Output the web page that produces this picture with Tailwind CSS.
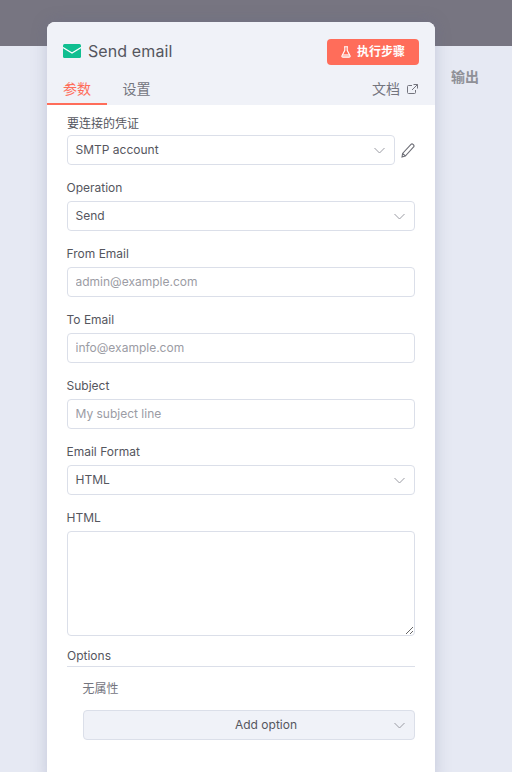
<!DOCTYPE html>
<html lang="en">
<head>
    <meta charset="UTF-8">
    <title>Send email</title>
    <script src="https://cdn.jsdelivr.net/npm/@tailwindcss/browser@4"></script>
</head>
<body class="bg-[#e6e9f3] font-['Inter','Noto_Sans_CJK_SC',sans-serif] antialiased">
    <div class="relative h-[772px] w-[512px] overflow-hidden">
        <!-- dimmed top bar -->
        <div class="h-[46px] bg-[#777581]"></div>
        <!-- output label -->
        <div class="absolute left-[451px] top-[68px] text-[14px] leading-[18px] font-semibold text-[#8f9097]">输出</div>

        <!-- node panel -->
        <div class="absolute left-[47px] top-[22px] h-[760px] w-[388px] overflow-hidden rounded-t-lg bg-white shadow-[0_0_16px_rgba(90,100,140,0.25)]">
            <div class="h-[83px] bg-[#f0f2f8]">
                <div class="flex h-[60px] items-center justify-between px-[16px]">
                    <div class="flex items-center gap-[7px]">
                        <svg width="18" height="14" viewBox="0 0 18 14" class="mt-[-3px]">
                            <rect width="18" height="14" rx="1.500" fill="#10bf91"></rect>
                            <path d="M0 3.500 9 9 18 3.500" fill="none" stroke="#fff" stroke-width="1.200"></path>
                        </svg>
                        <span class="mt-[-3px] text-[16px] leading-[20px] tracking-[0.1px] text-[#55565e]">Send email</span>
                    </div>
                    <button class="mt-[-1px] flex h-[26px] w-[92px] items-center justify-center gap-[6px] rounded-[4px] bg-[#ff6d5a] text-[12px] font-semibold text-white">
                        <svg width="10" height="12" viewBox="0 0 10 12" fill="none" stroke="#fff" stroke-width="1.100">
                            <path d="M3 .7h4M3.800.7v3.600L1 9.700c-.4.800 0 1.600 1 1.600h6c1 0 1.400-.8 1-1.600L6.200 4.300V.7"></path>
                            <path d="M2 8h6l1 2.500-1 .8H2l-1-.8z" fill="#fff" fill-opacity=".6" stroke="none"></path>
                        </svg>
                        执行步骤
                    </button>
                </div>
                <div class="flex h-[23px] items-start text-[14px] leading-[14px]">
                    <div class="h-[23px] w-[60px] border-b-[2px] border-[#ff6d5a] pl-[16px] text-[#ff6d5a]">参数</div>
                    <div class="ml-[15.500px] text-[#74757e]">设置</div>
                    <div class="ml-auto flex items-center gap-[7px] pr-[17px] text-[#74757e]">
                        文档
                        <svg width="11" height="11" viewBox="0 0 11 11" fill="none" stroke="#74757e" stroke-width="1">
                            <path d="M5 1.500H1.500a1 1 0 0 0-1 1v6a1 1 0 0 0 1 1h6a1 1 0 0 0 1-1V6M6.500.5h4v4M10.500.5 5 6"></path>
                        </svg>
                    </div>
                </div>
            </div>

            <div class="px-[20px] text-[12px] leading-[18px] text-[#55565e]">
                <div class="pt-[10px]">
                    <div class="mb-[2px]">要连接的凭证</div>
                    <div class="flex items-center">
                        <div class="flex h-[30px] w-[328px] items-center justify-between rounded-[4px] border border-[#dbdfe9] pl-[7.500px] pr-[9px]">
                            SMTP account
                            <svg width="11" height="7" viewBox="0 0 11 7" fill="none" stroke="#9a9ba3" stroke-width="1"><path d="M.5 1 5.500 6l5-5"></path></svg>
                        </div>
                        <svg class="ml-[6px]" width="14" height="15" viewBox="0 0 14 15" fill="none" stroke="#6d6e76" stroke-width="1.100">
                            <path d="M1 14l.6-3.600L10 1.400c.6-.6 1.400-.6 2 0l.6.6c.6.6.6 1.400 0 2L4.300 13zM1.600 10.400 4.300 13"></path>
                        </svg>
                    </div>
                </div>

                <div class="mt-[14px]">
                    <div class="mb-[4px] ml-[-0.500px]">Operation</div>
                    <div class="flex h-[30px] items-center justify-between rounded-[4px] border border-[#dbdfe9] pl-[7.500px] pr-[9px]">
                        Send
                        <svg width="11" height="7" viewBox="0 0 11 7" fill="none" stroke="#9a9ba3" stroke-width="1"><path d="M.5 1 5.500 6l5-5"></path></svg>
                    </div>
                </div>

                <div class="mt-[14px]">
                    <div class="mb-[4px] ml-[-0.500px]">From Email</div>
                    <input class="block h-[30px] w-full rounded-[4px] border border-[#dbdfe9] pl-[7.500px] pb-[1px] placeholder:text-[#9b9ca4]" placeholder="admin@example.com">
                </div>

                <div class="mt-[14px]">
                    <div class="mb-[4px] ml-[-0.500px]">To Email</div>
                    <input class="block h-[30px] w-full rounded-[4px] border border-[#dbdfe9] pl-[7.500px] pb-[1px] placeholder:text-[#9b9ca4]" placeholder="info@example.com">
                </div>

                <div class="mt-[14px]">
                    <div class="mb-[4px] ml-[-0.500px]">Subject</div>
                    <input class="block h-[30px] w-full rounded-[4px] border border-[#dbdfe9] pl-[7.500px] pb-[1px] placeholder:text-[#9b9ca4]" placeholder="My subject line">
                </div>

                <div class="mt-[14px]">
                    <div class="mb-[4px] ml-[-0.500px]">Email Format</div>
                    <div class="flex h-[30px] items-center justify-between rounded-[4px] border border-[#dbdfe9] pl-[7.500px] pr-[9px]">
                        HTML
                        <svg width="11" height="7" viewBox="0 0 11 7" fill="none" stroke="#9a9ba3" stroke-width="1"><path d="M.5 1 5.500 6l5-5"></path></svg>
                    </div>
                </div>

                <div class="mt-[14px]">
                    <div class="mb-[4px] ml-[-0.500px]">HTML</div>
                    <textarea class="block h-[105px] w-full rounded-[4px] border border-[#dbdfe9]"></textarea>
                </div>

                <div class="mt-[11px] h-[20px] border-b border-[#dbdfe9]">Options</div>

                <div class="pl-[16px]">
                    <div class="mt-[13px] ml-[-0.500px] text-[#74757e]">无属性</div>
                    <div class="relative mt-[12px] flex h-[30px] items-center justify-center rounded-[4px] border border-[#dbdfe9] bg-[#f0f2f8] pl-[34px]">
                        Add option
                        <svg class="absolute right-[9px] top-[11px]" width="11" height="7" viewBox="0 0 11 7" fill="none" stroke="#9a9ba3" stroke-width="1"><path d="M.5 1 5.500 6l5-5"></path></svg>
                    </div>
                </div>
            </div>
        </div>
    </div>
</body>
</html>
